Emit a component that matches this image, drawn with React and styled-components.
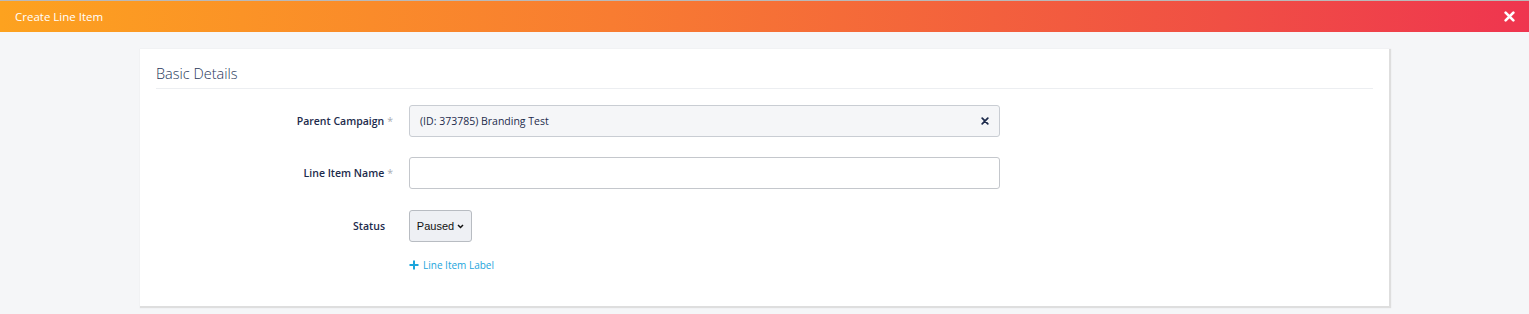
import React from 'react'
import styled, { createGlobalStyle } from 'styled-components';

const GlobalStyle = createGlobalStyle`
  body {
    margin:0;
    background:#f5f6f8;
    font-family:"Open Sans", "Noto Sans", sans-serif;
  }
`;

const Page = styled.div`
    height:314px;
    border-top:1px solid #b9b9b9;
    box-sizing:border-box;
`;

const Header = styled.div`
    height:31px;
    display:flex;
    align-items:center;
    justify-content:space-between;
    padding:0 14px 0 15px;
    background:linear-gradient(90deg, #fda21f 0%, #f87c31 40%, #f04f44 80%, #ef354f 100%);
    color:#fff;
`;

const HeaderTitle = styled.div`
    font-size:11.5px;
`;

const CloseBtn = styled.button`
    border:none;
    background:transparent;
    padding:0;
    display:flex;
    cursor:pointer;
`;

const Body = styled.div`
    padding:17px 140px 0 140px;
`;

const Card = styled.div`
    background:#fff;
    height:257px;
    box-sizing:border-box;
    padding:15px 16px 0 16px;
    box-shadow:1px 1px 1px 1px #dedede;
`;

const CardTitle = styled.div`
    font-size:14.5px;
    font-weight:300;
    color:#27365a;
    padding-bottom:5px;
    border-bottom:1px solid #eceef1;
`;

const Form = styled.div`
    display:grid;
    grid-template-columns:237px 591px;
    column-gap:16px;
    row-gap:20px;
    margin-top:16px;
    align-items:center;
`;

const Label = styled.div`
    text-align:right;
    font-size:10.5px;
    font-weight:600;
    color:#1d2b4c;
    padding-right:${({ $pad }) => $pad ? '8px' : '0'};
    margin-top:${({ $shift }) => $shift || 0}px;
`;

const Req = styled.span`
    color:#a9adb5;
    font-weight:400;
    margin-left:3px;
`;

const Field = styled.div`
    height:32px;
    box-sizing:border-box;
    border:1px solid ${({ $filled }) => $filled ? '#c9cdd3' : '#c4c7cc'};
    border-radius:3px;
    background:${({ $filled }) => $filled ? '#f5f6f8' : '#fff'};
    display:flex;
    align-items:center;
    justify-content:space-between;
    padding:0 10px;
    font-size:10.5px;
    color:#1d2b4c;
`;

const SelectWrap = styled.div`
    margin-top:1px;
`;

const Select = styled.div`
    width:63px;
    height:32px;
    box-sizing:border-box;
    border:1px solid #b8bcc2;
    border-radius:3px;
    background:#eef0f4;
    display:flex;
    align-items:center;
    justify-content:center;
    gap:3px;
    font-family:"Liberation Sans", Arial, sans-serif;
    font-size:11px;
    color:#111;
`;

const AddLink = styled.div`
    grid-column:2;
    display:flex;
    align-items:center;
    gap:4px;
    color:#1ba5dc;
    font-size:10px;
    margin-top:-4px;
`;

const Times = ({ size, color, stroke }) => (
    <svg width={size} height={size} viewBox="0 0 10 10">
        <path d="M1.5 1.5 L8.5 8.5 M8.5 1.5 L1.5 8.5" stroke={color} strokeWidth={stroke} strokeLinecap="round" />
    </svg>
);

const App = () => {
    return (
        <>
            <GlobalStyle />
            <Page>
                <Header>
                    <HeaderTitle>Create Line Item</HeaderTitle>
                    <CloseBtn><Times size={11} color="#fff" stroke={2.4} /></CloseBtn>
                </Header>
                <Body>
                    <Card>
                        <CardTitle>Basic Details</CardTitle>
                        <Form>
                            <Label>Parent Campaign<Req>*</Req></Label>
                            <Field $filled>
                                <span>(ID: 373785) Branding Test</span>
                                <Times size={8} color="#1d2b4c" stroke={2.2} />
                            </Field>
                            <Label>Line Item Name<Req>*</Req></Label>
                            <Field />
                            <Label $pad $shift={1}>Status</Label>
                            <SelectWrap>
                                <Select>
                                    Paused
                                    <svg width="7" height="5" viewBox="0 0 7 5">
                                        <path d="M1 1 L3.5 3.5 L6 1" stroke="#111" strokeWidth="1.5" fill="none" />
                                    </svg>
                                </Select>
                            </SelectWrap>
                            <AddLink>
                                <svg width="10" height="10" viewBox="0 0 10 10">
                                    <path d="M5 0.5 V9.5 M0.5 5 H9.5" stroke="#1ba5dc" strokeWidth="2" />
                                </svg>
                                Line Item Label
                            </AddLink>
                        </Form>
                    </Card>
                </Body>
            </Page>
        </>
    )
}

export default App
